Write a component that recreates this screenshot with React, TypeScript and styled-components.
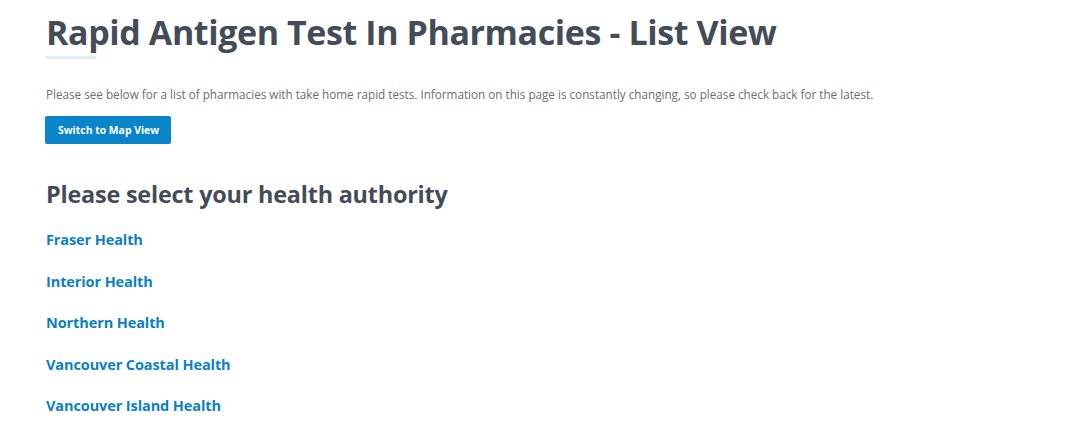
import styled, {createGlobalStyle} from "styled-components";

const GlobalStyle = createGlobalStyle`
  body {
    margin: 0;
    background: #ffffff;
    font-family: "Open Sans", "Noto Sans", sans-serif;
  }
`

const Page = styled.main`
  padding: 12px 46px 0;
`

const Title = styled.h1`
  margin: 0;
  font-size: 34px;
  line-height: 40px;
  font-weight: 700;
  color: #444c58;
  letter-spacing: -0.4px;
`

const TitleRule = styled.div`
  width: 50px;
  height: 3px;
  margin-top: 4px;
  background: #dbeffb;
`

const Intro = styled.p`
  margin: 27px 0 0;
  font-size: 11.7px;
  line-height: 16px;
  color: #6a6e73;
`

const MapButton = styled.button`
  margin-top: 14px;
  margin-left: -1px;
  height: 28px;
  padding: 0 12px 0 13px;
  border: none;
  border-radius: 2px;
  background: #0b85c9;
  color: #ffffff;
  font-family: inherit;
  font-size: 10.4px;
  font-weight: 700;
  cursor: pointer;
`

const SubTitle = styled.h2`
  margin: 34px 0 0;
  font-size: 23.4px;
  line-height: 32px;
  font-weight: 700;
  color: #444c58;
  letter-spacing: -0.2px;
`

const AuthorityList = styled.ul`
  list-style: none;
  margin: 20px 0 0;
  padding: 0;
  display: flex;
  flex-direction: column;
  gap: 21.5px;
`

const AuthorityLink = styled.a`
  display: block;
  font-size: 14.5px;
  line-height: 20px;
  font-weight: 700;
  color: #0b80c4;
  text-decoration: none;
  letter-spacing: -0.1px;
`

const authorities = [
    "Fraser Health",
    "Interior Health",
    "Northern Health",
    "Vancouver Coastal Health",
    "Vancouver Island Health",
]

export default function App() {
    return (
        <>
            <GlobalStyle/>
            <Page>
                <Title>Rapid Antigen Test In Pharmacies - List View</Title>
                <TitleRule/>
                <Intro>
                    Please see below for a list of pharmacies with take home rapid tests. Information on this page is
                    constantly changing, so please check back for the latest.
                </Intro>
                <MapButton>Switch to Map View</MapButton>
                <SubTitle>Please select your health authority</SubTitle>
                <AuthorityList>
                    {authorities.map(name => (
                        <li key={name}>
                            <AuthorityLink href="#">{name}</AuthorityLink>
                        </li>
                    ))}
                </AuthorityList>
            </Page>
        </>
    )
}
